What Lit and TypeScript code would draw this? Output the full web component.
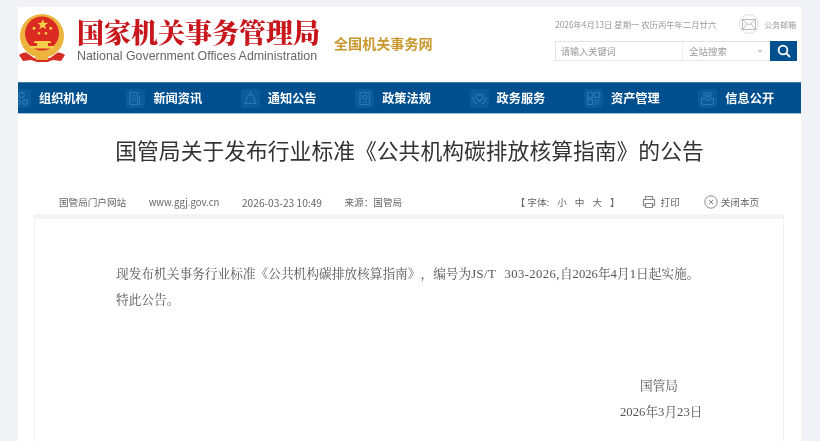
import { LitElement, html, css, svg } from "lit";
import { customElement } from "lit/decorators.js";

const icon = (body: unknown) => html`<span class="nav-ic"><svg viewBox="0 0 19 19" width="19" height="19" fill="none" stroke="#2a77b8" stroke-width="1.2">${body}</svg></span>`;

const NAV = [
  { t: "组织机构", i: svg`<circle cx="9.5" cy="6" r="2.6"/><circle cx="6" cy="13" r="2.4"/><circle cx="13" cy="13" r="2.4"/>` },
  { t: "新闻资讯", i: svg`<path d="M4 3.5h7.5v12H4zM6 7h3.5M6 9.5h3.5M6 12h3.5M13.5 8v7.5h2"/>` },
  { t: "通知公告", i: svg`<path d="M4 14.5c1.3-1 1.7-2.6 1.7-5a3.8 3.8 0 0 1 7.6 0c0 2.4.4 4 1.7 5zM8.5 4.2a1 1 0 0 1 2 0"/>` },
  { t: "政策法规", i: svg`<path d="M5 3.5h9.5v12H5zM7.5 13h4.5"/><circle cx="9.8" cy="8.5" r="2"/><path d="M11 5.5l1.5-1"/>` },
  { t: "政务服务", i: svg`<path d="M9.5 12.5L5.8 8.6a2.3 2.3 0 0 1 3.7-2.6a2.3 2.3 0 0 1 3.7 2.6zM3 8c0 3.5 2 6 4 7M16 8c0 3.5-2 6-4 7"/>` },
  { t: "资产管理", i: svg`<rect x="3.5" y="3.5" width="5" height="5"/><rect x="10.5" y="3.5" width="5" height="5"/><rect x="3.5" y="10.5" width="5" height="5"/><path d="M10.5 11h5M10.5 13h5M10.5 15h3"/>` },
  { t: "信息公开", i: svg`<path d="M6 8V4.5a1 1 0 0 1 1-1h5a1 1 0 0 1 1 1V8M3.5 9.5h4l1 2h2l1-2h4v5a1 1 0 0 1-1 1h-10a1 1 0 0 1-1-1z"/><circle cx="9.5" cy="6.5" r="1.4"/>` },
];

@customElement("app-root")
export class AppRoot extends LitElement {
  static styles = css`
    :host { display: block; height: 441px; overflow: hidden; background: #eff3f8; font-family: "Noto Sans CJK SC", "Noto Sans", sans-serif; }
    .page { width: 783px; margin: 7px 0 0 18px; background: #fff; height: 434px; filter: blur(0.35px); }
    .head { height: 75px; display: flex; }
    .logo { display: flex; margin: 7px 0 0 1px; height: 52px; }
    .brand { margin-left: 12px; width: 257px; }
    .brand h1 { margin: 0 0 3px; padding-top: 5px; font: 900 27px/26px "Noto Serif CJK SC", "Noto Sans CJK SC", serif; color: #c8161d; white-space: nowrap; }
    .brand p { margin: 0; font: 12.4px/16px "Liberation Sans", sans-serif; color: #666; white-space: nowrap; }
    .site { font: 700 14.1px/16px "Noto Sans CJK SC", sans-serif; color: #c9982f; margin: 28px 0 0 0; white-space: nowrap; }
    .tools { margin-left: auto; width: 242px; margin-right: 4px; }
    .date-row { display: flex; align-items: center; height: 20px; margin-top: 7px; font-size: 8.35px; color: #999; white-space: nowrap; }
    .mail { flex: none; width: 20px; height: 20px; border: 1px solid #ddd; border-radius: 50%; box-sizing: border-box; display: flex; align-items: center; justify-content: center; margin-left: 23px; }
    .mail-t { margin-left: 5px; font-size: 8px; }
    .search { display: flex; height: 20px; margin-top: 7px; border: 1px solid #e3e3e3; box-sizing: border-box; color: #999; }
    .input { width: 127px; padding-left: 5px; line-height: 18px; border-right: 1px solid #eee; box-sizing: border-box; font-size: 9.1px; }
    .select { width: 87px; padding-left: 6px; line-height: 18px; box-sizing: border-box; position: relative; font-size: 9.5px; }
    .select::after { content: ""; position: absolute; right: 7px; top: 8px; border: 3px solid transparent; border-top-color: #ccc; }
    .btn { flex: 1; margin: -1px -1px -1px 0; background: #00508f; display: flex; align-items: center; justify-content: center; }
    nav { height: 32px; background: #00508f; border-top: 1px solid #3d7bab; border-bottom: 1px solid #9fbbd3; box-sizing: border-box; overflow: hidden; }
    .nav-in { display: flex; margin-left: -6px; height: 100%; }
    .item { width: 114.4px; flex: none; display: flex; align-items: center; }
    .nav-ic { width: 19px; height: 19px; background: #0d5a98; border-radius: 4px; display: block; margin-right: 8px; }
    .nav-ic svg { display: block; }
    .item b { color: #fff; font-weight: 700; font-size: 12.2px; white-space: nowrap; }
    h2 { margin: 0; padding-top: 21px; height: 51px; text-align: center; font-weight: 400; font-size: 21.8px; line-height: 30px; color: #333; white-space: nowrap; }
    .meta { display: flex; align-items: center; height: 28px; padding: 4px 0 0 41px; font-size: 9.6px; color: #666; white-space: nowrap; box-sizing: border-box; }
    .meta > span { margin-right: 22.5px; }
    .meta .lat { font-size: 10.2px; }
    .meta .font { margin: 0 0 0 91px; display: flex; gap: 8px; }
    .act { display: flex; align-items: center; margin: 0 !important; }
    .print { margin-left: 22px !important; gap: 5px; }
    .close { margin-left: 24px !important; gap: 3px; }
    .art { margin: 0 17px 0 16px; height: 230px; border: 1px solid #f1f1f1; border-top: 5px solid #f3f3f3; padding: 42px 0 0 81px; font-family: "Liberation Serif", "Noto Serif CJK SC", serif; font-size: 12.7px; line-height: 26px; color: #555; text-spacing-trim: space-all; }
    .art p { margin: 0; white-space: nowrap; }
    .sign { margin: 60px 0 0 504px; }
    .sign p:first-child { padding-left: 20px; }
    .m { letter-spacing: .4px; word-spacing: 5px; }
  `;

  render() {
    return html`<div class="page">
      <header class="head">
        <div class="logo">
          <svg width="46" height="48" viewBox="0 0 46 48">
            <circle cx="23" cy="22" r="22" fill="#ecb43c"/>
            <path d="M0 41c3-2 6-3 8-2l7 5 8 1 8-1 7-5c2-1 5 0 8 2l-4 6-8-1-6 2H18l-6-2-8 1z" fill="#d72c24"/>
            <path d="M17 41h12v5H17z" fill="#ecb43c"/>
            <circle cx="23" cy="19.5" r="17" fill="#da2a22"/>
            <g fill="#f7cf4a">
              <path d="M23.7 5l1.4 3.8 4 .1-3.2 2.4 1.2 3.9-3.4-2.3-3.4 2.3 1.2-3.9-3.2-2.4 4-.1z"/>
              <circle cx="15" cy="14.3" r="1.5"/><circle cx="31.7" cy="14.3" r="1.5"/><circle cx="20" cy="19.3" r="1.3"/><circle cx="27" cy="19.3" r="1.3"/>
              <path d="M16 27h15l1.5 2H29v3h6v2.5H11V32h7v-3h-3.5z"/>
            </g>
          </svg>
          <div class="brand">
            <h1>国家机关事务管理局</h1>
            <p>National Government Offices Administration</p>
          </div>
        </div>
        <div class="site">全国机关事务网</div>
        <div class="tools">
          <div class="date-row">
            <span>2026年4月13日 星期一 农历丙午年二月廿六</span>
            <span class="mail"><svg width="14" height="11" viewBox="0 0 14 11" fill="none" stroke="#bbb"><rect x=".5" y=".5" width="13" height="10"/><path d="M.5.5L7 6l6.5-5.5M.5 10.5L5 5M13.5 10.5L9 5"/></svg></span>
            <span class="mail-t">公务邮箱</span>
          </div>
          <div class="search">
            <div class="input">请输入关键词</div>
            <div class="select">全站搜索</div>
            <div class="btn"><svg width="14" height="14" viewBox="0 0 14 14" fill="none" stroke="#fff" stroke-width="1.8"><circle cx="6" cy="6" r="4.4"/><path d="M9.2 9.2L13 13"/></svg></div>
          </div>
        </div>
      </header>
      <nav><div class="nav-in">${NAV.map((n) => html`<div class="item">${icon(n.i)}<b>${n.t}</b></div>`)}</div></nav>
      <h2>国管局关于发布行业标准《公共机构碳排放核算指南》的公告</h2>
      <div class="meta">
        <span>国管局门户网站</span><span>www.ggj.gov.cn</span><span class="lat">2026-03-23 10:49</span><span>来源：国管局</span>
        <span class="font"><span>【 字体:</span><span>小</span><span>中</span><span>大</span><span>】</span></span>
        <span class="act print"><svg width="14" height="14" viewBox="0 0 14 14" fill="none" stroke="#888" stroke-width="1.2"><path d="M3.5 4.5V1.5h7v3M3.5 10.5H1.5v-6h11v6h-2M3.5 8.5h7v4h-7z"/></svg>打印</span>
        <span class="act close"><svg width="14" height="14" viewBox="0 0 14 14" fill="none" stroke="#888"><circle cx="7" cy="7" r="6.2"/><path d="M4.8 4.8l4.4 4.4M9.2 4.8L4.8 9.2"/></svg>关闭本页</span>
      </div>
      <article class="art">
        <p>现发布机关事务行业标准《公共机构碳排放核算指南》，编号为<span class="m">JS/T 303-2026,</span>自2026年4月1日起实施。</p>
        <p>特此公告。</p>
        <div class="sign"><p>国管局</p><p>2026年3月23日</p></div>
      </article>
    </div>`;
  }
}
